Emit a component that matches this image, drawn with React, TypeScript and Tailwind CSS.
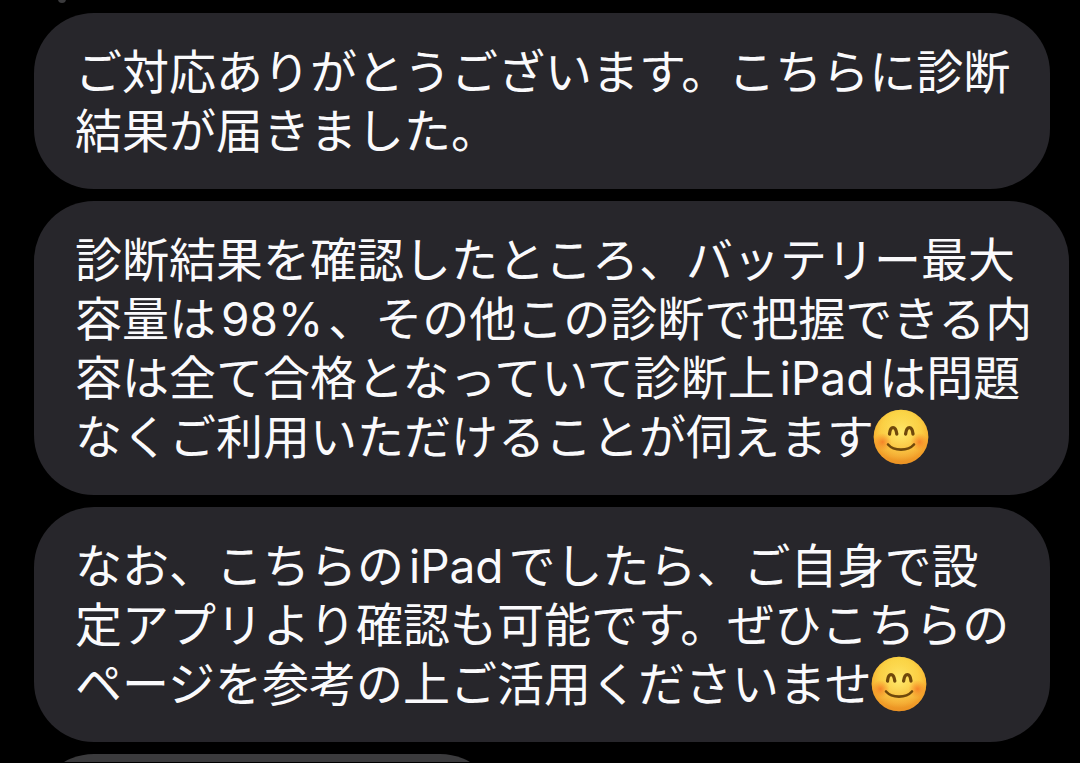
import type { ReactNode } from "react";

function SmilingFace({ id }: { id: string }) {
  return (
    <svg
      role="img"
      aria-label="😊"
      viewBox="0 0 56 56"
      className="-ml-px inline-block size-14 align-[-11px]"
    >
      <defs>
        <linearGradient id={`${id}-face`} x1="0" y1="0" x2="0" y2="1">
          <stop offset="0" stopColor="#f8cf3c" />
          <stop offset="0.5" stopColor="#fabd35" />
          <stop offset="0.85" stopColor="#f2a02c" />
          <stop offset="1" stopColor="#e58a22" />
        </linearGradient>
        <radialGradient id={`${id}-glow`} cx="0.5" cy="0.42" r="0.52">
          <stop offset="0" stopColor="#fff27a" stopOpacity="0.85" />
          <stop offset="0.7" stopColor="#ffe45c" stopOpacity="0.35" />
          <stop offset="1" stopColor="#f09a25" stopOpacity="0.5" />
        </radialGradient>
        <radialGradient id={`${id}-blush`}>
          <stop offset="0" stopColor="#f4691f" stopOpacity="0.7" />
          <stop offset="1" stopColor="#f4791f" stopOpacity="0" />
        </radialGradient>
      </defs>
      <circle cx="28" cy="28" r="27.3" fill={`url(#${id}-face)`} />
      <circle cx="28" cy="28" r="27.3" fill={`url(#${id}-glow)`} />
      <ellipse cx="9.5" cy="33" rx="9" ry="9" fill={`url(#${id}-blush)`} />
      <ellipse cx="46.5" cy="33" rx="9" ry="9" fill={`url(#${id}-blush)`} />
      <g fill="none" stroke="#6f480b" strokeLinecap="round">
        <path strokeWidth="3.3" d="M16.5 25C17.3 16.5 22.7 16.5 23.8 25" />
        <path strokeWidth="3.3" d="M32.6 25C33.7 16.5 39.1 16.5 40 25" />
        <path strokeWidth="2.6" d="M15 35.5C21 42.3 35 42.3 41 35.5" />
      </g>
    </svg>
  );
}

function Latin({ children }: { children: ReactNode }) {
  return <span className="mx-[5px] font-['Inter',sans-serif] text-[46px]">{children}</span>;
}

function Bubble({ lines, wide = false }: { lines: ReactNode[]; wide?: boolean }) {
  return (
    <li
      className={`shrink-0 rounded-[60px] bg-[#27262b] pt-[26px] pb-8 pl-[41px] ${
        wide ? "mr-[11px]" : "mr-[30px]"
      }`}
    >
      <p className="whitespace-nowrap">
        {lines.map((line, i) => (
          <span key={i} className="block h-[59px]">
            {line}
          </span>
        ))}
      </p>
    </li>
  );
}

export default function App() {
  return (
    <main
      lang="ja"
      className="relative h-screen overflow-hidden border-b border-black bg-black font-['Noto_Sans_CJK_JP',sans-serif] text-[47px] leading-[59px] text-[#fafafc]"
    >
      <span className="absolute -top-3 left-[58px] h-[15px] w-2 rounded-full bg-[#3a3a3c]" />
      <ul className="flex h-full flex-col gap-3 pt-[13px] pl-[34px]">
        <Bubble
          lines={["ご対応ありがとうございます。こちらに診断", "結果が届きました。"]}
        />
        <Bubble
          wide
          lines={[
            "診断結果を確認したところ、バッテリー最大",
            <>
              容量は<Latin>98%</Latin>、その他この診断で把握できる内
            </>,
            <>
              容は全て合格となっていて診断上<Latin>iPad</Latin>は問題
            </>,
            <>
              なくご利用いただけることが伺えます
              <SmilingFace id="diagnosis" />
            </>,
          ]}
        />
        <Bubble
          lines={[
            <>
              なお、こちらの<Latin>iPad</Latin>でしたら、ご自身で設
            </>,
            "定アプリより確認も可能です。ぜひこちらの",
            <>
              ページを参考の上ご活用くださいませ
              <SmilingFace id="settings" />
            </>,
          ]}
        />
        <li className="h-[120px] w-[466px] shrink-0 rounded-[60px] bg-[#3b3b3d]" />
      </ul>
    </main>
  );
}
